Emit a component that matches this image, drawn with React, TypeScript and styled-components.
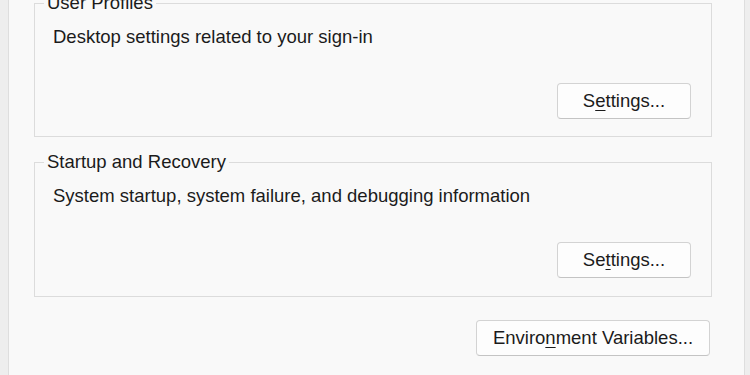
import React from "react";
import styled, { createGlobalStyle } from "styled-components";

const GlobalStyle = createGlobalStyle`
  html, body {
    margin: 0;
    padding: 0;
    background: #eeeeee;
    overflow: hidden;
  }
  body {
    font-family: "Liberation Sans", Arial, sans-serif;
    color: #1b1b1b;
  }
`;

const Frame = styled.div`
  display: flex;
  width: 750px;
  height: 375px;
  overflow: hidden;
  background: #eeeeee;
`;

const Gutter = styled.div<{ $w: number }>`
  width: ${(p) => p.$w}px;
  flex: none;
  background: #eeeeee;
`;

const Panel = styled.div`
  flex: 1;
  background: #f9f9f9;
  border-left: 1px solid #dedede;
  border-right: 1px solid #dedede;
  padding: 3px 32px 0 25px;
  display: flex;
  flex-direction: column;
  gap: 25px;
  font-size: 18.5px;
`;

const GroupBox = styled.section<{ $h: number }>`
  position: relative;
  box-sizing: border-box;
  height: ${(p) => p.$h}px;
  border: 1px solid #dcdcdc;
  padding: 22px 20px ${(p) => p.$h - 117}px 18px;
  display: flex;
  flex-direction: column;
`;

const GroupTitle = styled.div`
  position: absolute;
  top: -12px;
  left: 9px;
  padding: 0 3px;
  line-height: 22px;
  background: #f9f9f9;
  color: #1b1b1b;
  white-space: nowrap;
`;

const Description = styled.div`
  line-height: 22px;
  color: #1b1b1b;
  white-space: nowrap;
`;

const ButtonRow = styled.div<{ $pad?: number; $top?: number }>`
  margin-top: ${(p) => (p.$top === undefined ? "auto" : `${p.$top}px`)};
  display: flex;
  justify-content: flex-end;
  padding-right: ${(p) => p.$pad ?? 0}px;
`;

const Button = styled.button<{ $w: number }>`
  box-sizing: border-box;
  width: ${(p) => p.$w}px;
  height: 36px;
  padding: 0;
  border: 1px solid #d3d3d3;
  border-bottom-color: #c4c4c4;
  border-radius: 4px;
  background: #fdfdfd;
  font-family: "Liberation Sans", Arial, sans-serif;
  font-size: 18.5px;
  color: #1b1b1b;
  line-height: 22px;
  text-align: center;
  u {
    text-decoration-thickness: 1px;
    text-underline-offset: 3px;
  }
`;

export default function App() {
  return (
    <>
      <GlobalStyle />
      <Frame>
        <Gutter $w={8} />
        <Panel>
          <GroupBox $h={134}>
            <GroupTitle>User Profiles</GroupTitle>
            <Description>Desktop settings related to your sign-in</Description>
            <ButtonRow>
              <Button $w={134}>
                S<u>e</u>ttings...
              </Button>
            </ButtonRow>
          </GroupBox>
          <GroupBox $h={135}>
            <GroupTitle>Startup and Recovery</GroupTitle>
            <Description>
              System startup, system failure, and debugging information
            </Description>
            <ButtonRow>
              <Button $w={134}>
                Se<u>t</u>tings...
              </Button>
            </ButtonRow>
          </GroupBox>
          <ButtonRow $pad={2} $top={-2}>
            <Button $w={234}>
              Enviro<u>n</u>ment Variables...
            </Button>
          </ButtonRow>
        </Panel>
        <Gutter $w={5} />
      </Frame>
    </>
  );
}
